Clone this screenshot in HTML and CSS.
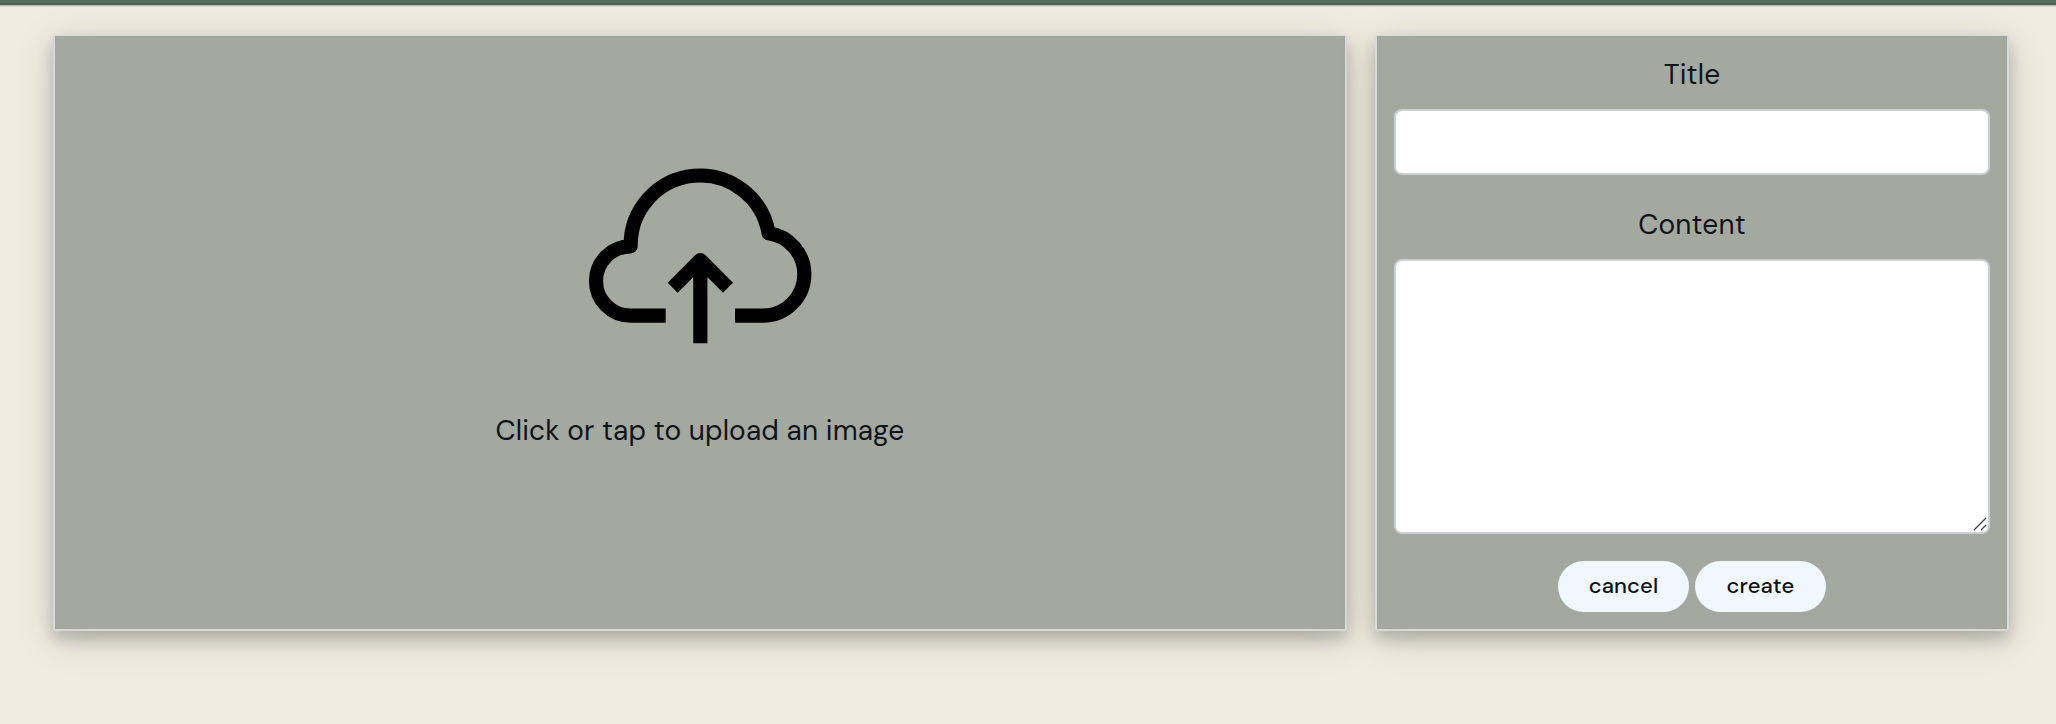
FILE: index.html
```html
<!DOCTYPE html>
<html lang="en">
<head>
<meta charset="utf-8">
<title>Create post</title>
<link rel="stylesheet" href="styles.css">
</head>
<body>
<header class="topbar"></header>
<main class="editor">
  <section class="panel upload">
    <svg class="cloud" viewBox="0 0 840 630" fill="none" stroke="#000" stroke-width="42.5" stroke-linejoin="round">
      <path d="M317 497H212A104 104 0 0 1 212 289A208.500 208.500 0 0 1 626 250A124.500 124.500 0 0 1 733 373A124 124 0 0 1 609 497H525"/>
      <path d="M421 580V332M338 413L421 330L504 413"/>
    </svg>
    <p class="hint">Click or tap to upload an image</p>
  </section>
  <form class="panel fields">
    <label class="label title" for="title">Title</label>
    <input class="box" id="title" type="text">
    <label class="label content" for="content">Content</label>
    <div class="area-wrap">
      <textarea class="box area" id="content"></textarea>
      <svg class="grip" viewBox="0 0 14 14" fill="none" stroke="#444" stroke-width="1.3">
        <path d="M1 13L13 1M8 13L13 8"/>
      </svg>
    </div>
    <div class="actions">
      <button class="btn" type="button">cancel</button>
      <button class="btn" type="button">create</button>
    </div>
  </form>
</main>
</body>
</html>
```
FILE: styles.css
```css
* { box-sizing: border-box; }
body {
  margin: 0;
  height: 724px;
  overflow: hidden;
  background: #f0ece0;
  color: #0f141c;
  font-family: "DM Sans", Inter, sans-serif;
  font-size: 28px;
  font-variation-settings: "opsz" 14;
}
.topbar {
  height: 6px;
  background: linear-gradient(#57705e 0 3px, #4a6252 3px 5px, #b9bdb6 5px);
  box-shadow: 0 1px 0 #d9d7d0;
}
.editor {
  display: flex;
  gap: 28px;
  padding: 29px 47px 0 53px;
}
.panel {
  height: 596px;
  border: 2px solid #d8d9db;
  border-top-width: 1px;
  border-radius: 2px;
  background: #a3a99e;
  box-shadow: 0 8px 16px rgba(0, 0, 0, 0.2), 0 8px 40px rgba(0, 0, 0, 0.14);
}
.upload {
  width: 1294px;
  display: flex;
  flex-direction: column;
  align-items: center;
  padding-top: 114px;
}
.cloud { display: block; width: 280px; height: 210px; }
.hint { margin: 51px 0 0; line-height: 40px; letter-spacing: 0.15px; }
.fields {
  width: 634px;
  padding: 0 17px;
  display: flex;
  flex-direction: column;
}
.label { display: block; text-align: center; line-height: 40px; letter-spacing: 0.2px; }
.title { margin: 19px 0 14px; }
.content { margin: 30px 0 14px; }
.box {
  display: block;
  width: 100%;
  height: 66px;
  margin: 0;
  padding: 12px;
  border: 2px solid #cbd0d5;
  border-radius: 8px;
  background: #fff;
  font: inherit;
  outline: none;
}
.area-wrap { position: relative; }
.area { height: 275px; resize: none; }
.grip { position: absolute; right: 3px; bottom: 3px; width: 14px; height: 14px; }
.actions { display: flex; justify-content: center; gap: 6px; padding-top: 27px; }
.btn {
  width: 131px;
  height: 51px;
  padding: 0 0 2px;
  border: 0;
  border-radius: 26px;
  background: #f0f7ff;
  color: #0b120f;
  font: 500 22px "DM Sans", Inter, sans-serif;
  font-variation-settings: "opsz" 14;
  letter-spacing: 0.15px;
}
```
